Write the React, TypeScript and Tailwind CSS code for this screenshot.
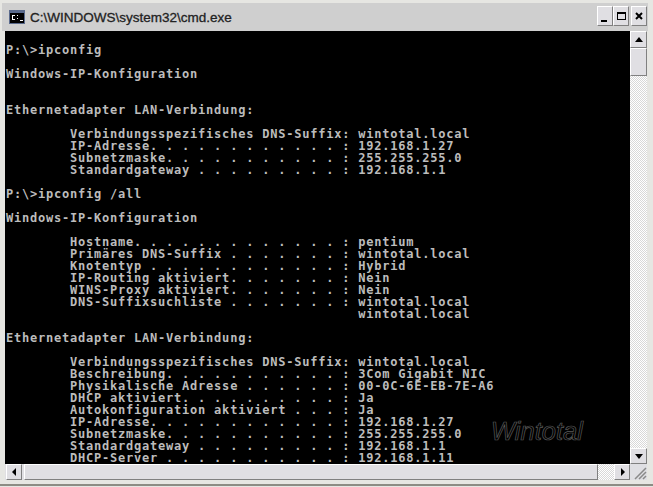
const lines = [
"",
"P:\\>ipconfig",
"",
"Windows-IP-Konfiguration",
"",
"",
"Ethernetadapter LAN-Verbindung:",
"",
"        Verbindungsspezifisches DNS-Suffix: wintotal.local",
"        IP-Adresse. . . . . . . . . . . . : 192.168.1.27",
"        Subnetzmaske. . . . . . . . . . . : 255.255.255.0",
"        Standardgateway . . . . . . . . . : 192.168.1.1",
"",
"P:\\>ipconfig /all",
"",
"Windows-IP-Konfiguration",
"",
"        Hostname. . . . . . . . . . . . . : pentium",
"        Primäres DNS-Suffix . . . . . . . : wintotal.local",
"        Knotentyp . . . . . . . . . . . . : Hybrid",
"        IP-Routing aktiviert. . . . . . . : Nein",
"        WINS-Proxy aktiviert. . . . . . . : Nein",
"        DNS-Suffixsuchliste . . . . . . . : wintotal.local",
"                                            wintotal.local",
"",
"Ethernetadapter LAN-Verbindung:",
"",
"        Verbindungsspezifisches DNS-Suffix: wintotal.local",
"        Beschreibung. . . . . . . . . . . : 3Com Gigabit NIC",
"        Physikalische Adresse . . . . . . : 00-0C-6E-EB-7E-A6",
"        DHCP aktiviert. . . . . . . . . . : Ja",
"        Autokonfiguration aktiviert . . . : Ja",
"        IP-Adresse. . . . . . . . . . . . : 192.168.1.27",
"        Subnetzmaske. . . . . . . . . . . : 255.255.255.0",
"        Standardgateway . . . . . . . . . : 192.168.1.1",
"        DHCP-Server . . . . . . . . . . . : 192.168.1.11",
];

const btn = "flex items-center justify-center border border-t-white border-l-white border-r-[#808080] border-b-[#808080] bg-[#e0dfe3]";
const track = "bg-[repeating-conic-gradient(#d8d8d8_0_25%,#ffffff_0_50%)] bg-[length:2px_2px]";

export default function App() {
  return (
    <div className="w-[653px] h-[487px] bg-[#e6e6e2] overflow-hidden flex flex-col pt-[3px] font-['Liberation_Sans',sans-serif]">
      <div className="h-[28px] shrink-0 flex items-start bg-[#cfcfcf] ml-[2px] mr-[5px] pl-[7px] pr-[1px] pt-[3px]">
        <svg width="16" height="14" viewBox="0 0 16 14" className="shrink-0 mt-[4px]">
          <rect width="16" height="14" fill="#5a6a8c" />
          <rect x="1" y="3" width="14" height="10" fill="#000" />
          <path d="M3 5h3v1H3zM3 6h1v3H3zM3 9h3v1H3zM8 5h1v1H8zM8 8h1v1H8zM11 10h3v1h-3z" fill="#fff" />
        </svg>
        <span className="ml-[5px] mt-[5px] text-[13.5px] leading-none text-[#222] whitespace-nowrap [-webkit-text-stroke:0.3px_#222]">C:\WINDOWS\system32\cmd.exe</span>
        <div className="ml-auto flex items-start">
          <div className={`${btn} w-[16px] h-[20px] items-end justify-start pb-[3px] pl-[3px]`}><div className="w-[6px] h-[2px] bg-black" /></div>
          <div className={`${btn} w-[16px] h-[20px]`}><div className="w-[9px] h-[8px] border border-t-2 border-black" /></div>
          <div className={`${btn} w-[16px] h-[20px] ml-[2px]`}>
            <svg width="8" height="8" viewBox="0 0 8 8"><path d="M1 1l6 6M7 1l-6 6" stroke="#000" strokeWidth="2" /></svg>
          </div>
        </div>
      </div>
      <div className="h-[449px] shrink-0 flex ml-[5px] mr-[6px]">
        <div className="flex-1 min-w-0 flex flex-col">
          <div className="relative flex-1 min-h-0 bg-black overflow-hidden">
            <pre className="pl-[1px] pt-[1px] text-[12px] tracking-[0.78px] leading-[12px] font-bold text-[#bcbcbc] font-['DejaVu_Sans_Mono',monospace]">{lines.join("\n")}</pre>
            <span className="absolute left-[486px] top-[388px] text-[25.5px] leading-none italic text-transparent [-webkit-text-stroke:0.7px_#5a5a5a] font-['Liberation_Sans',sans-serif]">Wintotal</span>
          </div>
          <div className="h-[16px] shrink-0 flex bg-[#e0dfe3]">
            <div className={`${btn} ml-[1px] w-[16px] h-full`}>
              <svg width="5" height="8" viewBox="0 0 5 8"><path d="M4 0v8L0 4z" fill="#000" /></svg>
            </div>
            <div className={`${btn} ml-[2px] flex-1`} />
            <div className={`w-[16px] ${track}`} />
            <div className={`${btn} w-[16px] h-full`}>
              <svg width="5" height="8" viewBox="0 0 5 8"><path d="M1 0v8l4-4z" fill="#000" /></svg>
            </div>
          </div>
        </div>
        <div className="w-[17px] shrink-0 flex flex-col">
          <div className={`flex-1 min-h-0 flex flex-col ${track}`}>
            <div className={`${btn} h-[17px]`}>
              <svg width="8" height="5" viewBox="0 0 8 5"><path d="M0 5h8L4 0z" fill="#000" /></svg>
            </div>
            <div className={`${btn} h-[28px]`} />
            <div className="flex-1" />
            <div className={`${btn} h-[16px]`}>
              <svg width="8" height="5" viewBox="0 0 8 5"><path d="M0 0h8L4 5z" fill="#000" /></svg>
            </div>
          </div>
          <div className="h-[16px] shrink-0 bg-[#dfdfe3] flex items-end justify-end">
            <svg width="14" height="14" viewBox="0 0 14 14"><path d="M13 2L2 13M13 6l-7 7M13 10l-3 3" stroke="#8a8a8a" strokeWidth="1.5" /></svg>
          </div>
        </div>
      </div>
      <div className="flex-1 min-h-0 border-b-2 border-b-[#8c8c84] mb-[1px]" />
    </div>
  );
}
